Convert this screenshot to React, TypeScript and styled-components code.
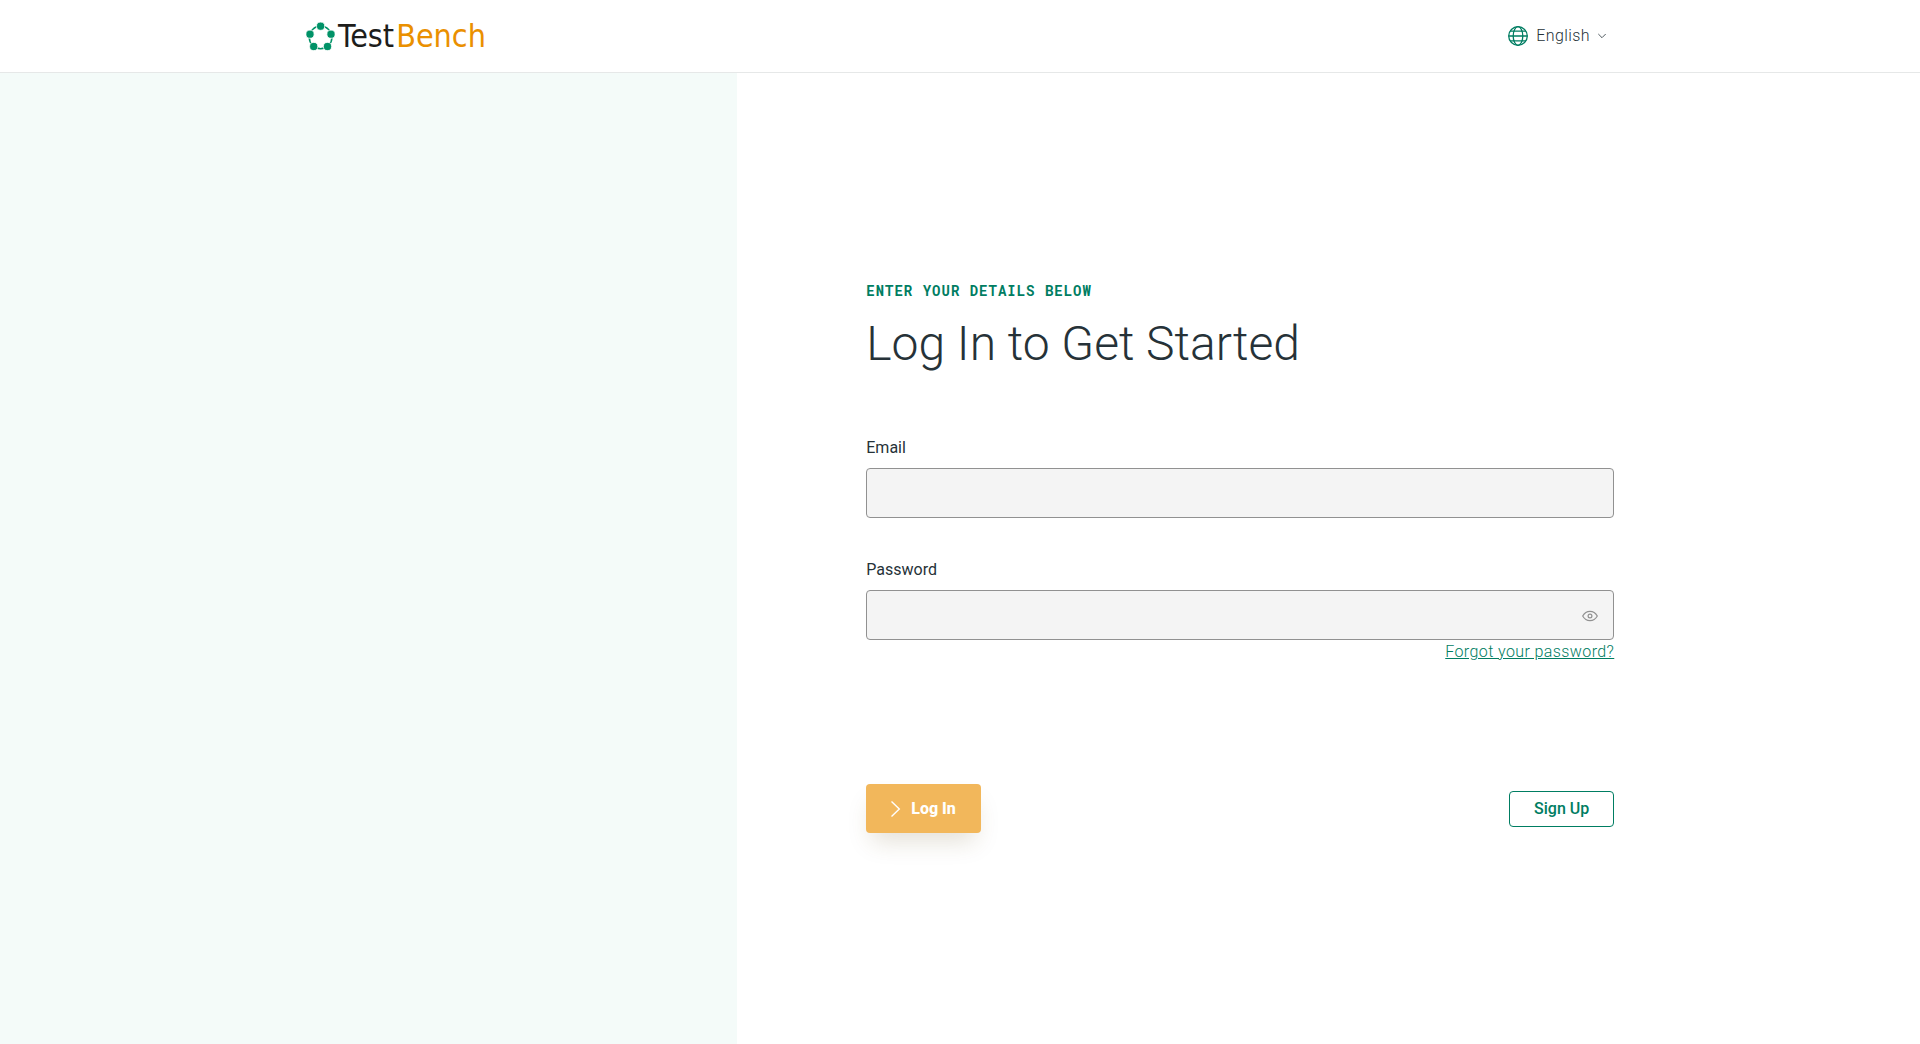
import React, { useState } from "react";
import styled, { createGlobalStyle } from "styled-components";

const green = "#007d62";
const ink = "#263238";

const GlobalStyle = createGlobalStyle`
  *, *::before, *::after { box-sizing: border-box; }
  body {
    margin: 0;
    background: #fff;
    color: ${ink};
    font-family: Roboto, "Liberation Sans", sans-serif;
    font-size: 16px;
    line-height: 24px;
  }
  button, input { font: inherit; color: inherit; }
`;

const Page = styled.div`
  display: flex;
  flex-direction: column;
  min-height: 100vh;
`;

const Header = styled.header`
  border-bottom: 1px solid #e6e8e8;
`;

const HeaderInner = styled.div`
  display: flex;
  align-items: center;
  justify-content: space-between;
  width: 100%;
  max-width: 1308px;
  height: 72px;
  margin: 0 auto;
`;

const Logo = styled.a`
  display: flex;
  align-items: center;
  gap: 3px;
  color: #1d1d1b;
  font-family: "DejaVu Sans Condensed", "Noto Sans", sans-serif;
  font-size: 32px;
  line-height: 41px;
  text-decoration: none;
`;

const LogoAccent = styled.span`
  margin-left: 2px;
  color: #ea9000;
`;

const LanguageButton = styled.button`
  display: flex;
  align-items: center;
  gap: 8px;
  padding: 0 8px;
  border: 0;
  background: none;
  font-weight: 300;
  letter-spacing: 0.025em;
  cursor: pointer;
`;

const Main = styled.main`
  display: flex;
  flex: 1;
`;

const SidePanel = styled.div`
  flex: 0 0 38.4%;
  background: #f4fbf9;
`;

const Content = styled.section`
  display: flex;
  flex: 1;
  align-items: center;
  padding: 40px 24px 40px 129px;
`;

const Form = styled.form`
  width: 100%;
  max-width: 748px;
`;

const Eyebrow = styled.p`
  margin: 0 0 14px;
  color: ${green};
  font-family: "Roboto Mono", "Liberation Mono", monospace;
  font-size: 14px;
  font-weight: 700;
  line-height: 14px;
  letter-spacing: 1px;
  text-transform: uppercase;
`;

const Title = styled.h1`
  margin: 0 0 60px;
  font-size: 48px;
  font-weight: 300;
  line-height: 64px;
`;

const Field = styled.div`
  display: flex;
  flex-direction: column;
  gap: 8px;
  margin-bottom: 40px;
`;

const InputBox = styled.div`
  display: flex;
  align-items: center;
  height: 50px;
  padding: 0 15px;
  border: 1px solid #919191;
  border-radius: 4px;
  background: #f4f4f4;
  &:focus-within { border-color: ${green}; }
`;

const Input = styled.input`
  flex: 1;
  min-width: 0;
  height: 100%;
  border: 0;
  outline: 0;
  background: transparent;
`;

const IconButton = styled.button`
  display: flex;
  padding: 0;
  border: 0;
  background: none;
  color: #919191;
  cursor: pointer;
`;

const ForgotLink = styled.a`
  align-self: flex-end;
  margin-top: -8px;
  color: ${green};
  font-weight: 300;
  letter-spacing: 0.025em;
`;

const Actions = styled.div`
  display: flex;
  align-items: center;
  justify-content: space-between;
  margin-top: 120px;
`;

const PrimaryButton = styled.button`
  display: flex;
  align-items: center;
  gap: 9px;
  height: 49px;
  padding: 0 25px 0 24px;
  border: 0;
  border-radius: 4px;
  background: #f2b75b;
  box-shadow: 0 14px 24px -6px rgba(100, 80, 30, 0.18);
  color: #fff;
  font-weight: 800;
  cursor: pointer;
`;

const SecondaryButton = styled.button`
  height: 36px;
  padding: 0 24px;
  border: 1px solid ${green};
  border-radius: 4px;
  background: #fff;
  color: ${green};
  font-weight: 500;
  cursor: pointer;
`;

const LogoMark = () => (
  <svg width="29" height="29" viewBox="0 0 29 29" fill="none" aria-hidden="true">
    <circle cx="14.600" cy="15.400" r="11.300" stroke="#009267" strokeWidth="1.500" />
    <g fill="#009267" stroke="#fff" strokeWidth="0.800">
      <circle cx="14.600" cy="4.200" r="4.100" />
      <circle cx="25" cy="12.200" r="4.100" />
      <circle cx="21.500" cy="24.500" r="4.100" />
      <circle cx="7.700" cy="24.500" r="4.100" />
      <circle cx="4" cy="12.200" r="4.100" />
    </g>
  </svg>
);

const GlobeIcon = () => (
  <svg width="20" height="20" viewBox="0 0 20 20" fill="none" stroke={green} strokeWidth="1.300" aria-hidden="true">
    <circle cx="10" cy="10" r="9.300" />
    <ellipse cx="10" cy="10" rx="4.800" ry="9.300" />
    <path d="M.7 10h18.600M2.400 5.200h15.200M2.400 14.800h15.200" />
  </svg>
);

const ChevronDown = () => (
  <svg width="8" height="6" viewBox="0 0 8 6" fill="none" stroke={ink} strokeWidth="0.800" aria-hidden="true">
    <path d="M.3 1 4 4.700 7.700 1" />
  </svg>
);

const ChevronRight = () => (
  <svg width="12" height="16" viewBox="0 0 12 16" fill="none" stroke="#fff" strokeWidth="1.400" aria-hidden="true">
    <path d="M1.500.5 9.300 8l-7.800 7.500" />
  </svg>
);

const EyeIcon = () => (
  <svg width="16" height="14" viewBox="0 -2 16 14" fill="none" stroke="currentColor" strokeWidth="1.200" aria-hidden="true">
    <path d="M.7 6C4.200-.2 11.800-.2 15.300 6 11.800 12.200 4.200 12.200.7 6Z" />
    <circle cx="8" cy="6" r="1.900" />
  </svg>
);

export default function App() {
  const [visible, setVisible] = useState(false);
  return (
    <Page>
      <GlobalStyle />
      <Header>
        <HeaderInner>
          <Logo href="#home">
            <LogoMark />
            <span>Test<LogoAccent>Bench</LogoAccent></span>
          </Logo>
          <LanguageButton type="button">
            <GlobeIcon />
            English
            <ChevronDown />
          </LanguageButton>
        </HeaderInner>
      </Header>
      <Main>
        <SidePanel />
        <Content>
          <Form onSubmit={(event) => event.preventDefault()}>
            <Eyebrow>Enter your details below</Eyebrow>
            <Title>Log In to Get Started</Title>
            <Field>
              <label htmlFor="email">Email</label>
              <InputBox>
                <Input id="email" type="email" autoComplete="email" />
              </InputBox>
            </Field>
            <Field>
              <label htmlFor="password">Password</label>
              <InputBox>
                <Input id="password" type={visible ? "text" : "password"} autoComplete="current-password" />
                <IconButton type="button" aria-label="Show password" onClick={() => setVisible(!visible)}>
                  <EyeIcon />
                </IconButton>
              </InputBox>
              <ForgotLink href="#forgot">Forgot your password?</ForgotLink>
            </Field>
            <Actions>
              <PrimaryButton type="submit">
                <ChevronRight />
                Log In
              </PrimaryButton>
              <SecondaryButton type="button">Sign Up</SecondaryButton>
            </Actions>
          </Form>
        </Content>
      </Main>
    </Page>
  );
}
